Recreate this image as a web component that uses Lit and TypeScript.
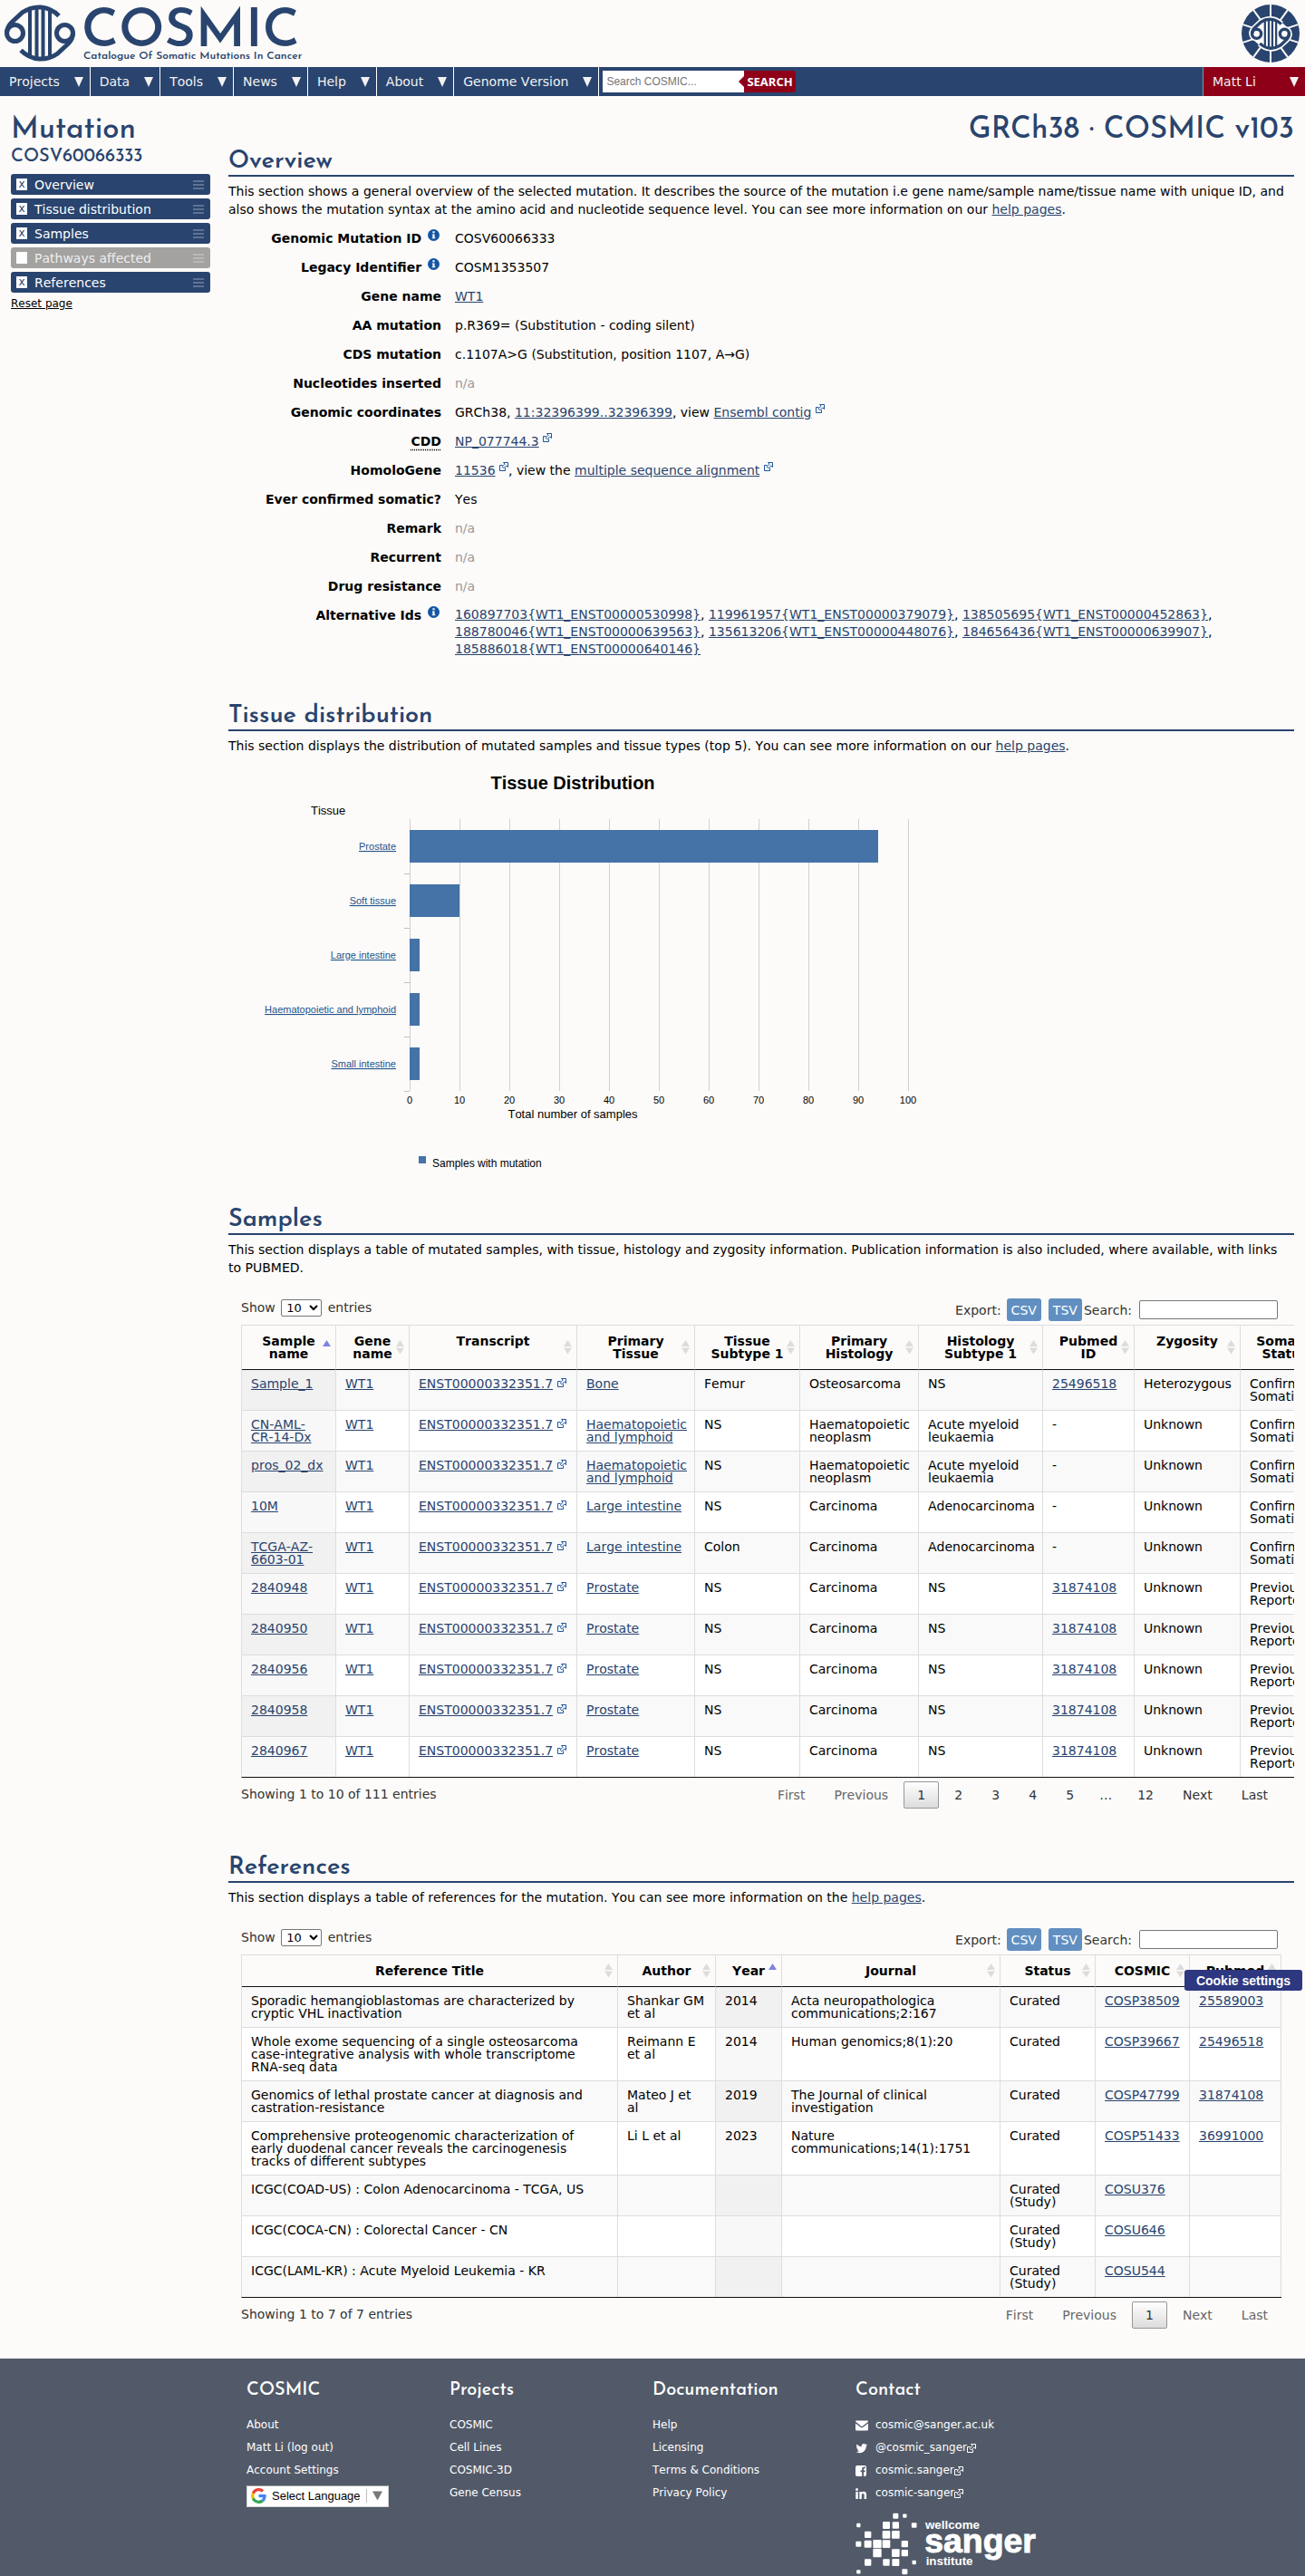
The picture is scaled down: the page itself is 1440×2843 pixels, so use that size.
import { LitElement, html, svg, css, nothing, TemplateResult } from "lit";
import { customElement, property } from "lit/decorators.js";
import { classMap } from "lit/directives/class-map.js";

const externalIcon = html`<svg class="ext" width="10" height="10" viewBox="0 0 10 10" aria-hidden="true">
    <path d="M3.500 3.500h-3v6h6v-3" fill="none" stroke="currentColor" />
    <path d="M4.500 .5h5v5L7.800 3.900 4.800 6.900 3.100 5.200 6.100 2.200z" fill="none" stroke="currentColor" />
  </svg>`;

// one loop with its long stem; the emblem is this half plus the same half turned round
const emblemHalf = svg`
  <circle cx="12.500" cy="32.500" r="9" />
  <path d="M3.500 32.500C3.500 27 5.500 24 9 20.500L21 9.500C33 1.500 49 1.500 61 13.500" />
`;

const emblemShape = svg`
  ${emblemHalf}
  <g transform="rotate(180 40 32.500)">${emblemHalf}</g>
  <path d="M29 6V59M36.500 4V61M43.500 4V61M51 6V59" stroke-width="4" />
`;

@customElement("site-header")
class SiteHeader extends LitElement {
  static styles = css`
    :host {
      display: block;
      font-family: "DejaVu Sans", Verdana, sans-serif;
    }
    .brand {
      display: flex;
      justify-content: space-between;
      align-items: center;
      height: 74px;
      padding: 0 6px 0 4px;
    }
    .brand svg {
      display: block;
    }
    .logo-big {
      font: 600 59px "Josefin Sans", Lato, sans-serif;
    }
    .logo-small {
      font: 600 12px "Josefin Sans", Lato, sans-serif;
    }
    .bar {
      display: flex;
      height: 32px;
      background: #29446e;
    }
    .menu {
      display: flex;
      align-items: center;
      gap: 16px;
      padding: 0 7px 0 10px;
      border: 0;
      border-right: 1px solid #fff;
      background: none;
      color: #f2f2f2;
      font: inherit;
      font-size: 14px;
    }
    .search {
      display: flex;
      align-items: center;
      flex: 1;
      padding-left: 4px;
    }
    .search input {
      box-sizing: border-box;
      width: 156px;
      height: 24px;
      padding: 0 4px;
      border: 0;
      background: #fff;
      font: 12px "Liberation Sans", Arial, sans-serif;
    }
    .search button {
      position: relative;
      height: 24px;
      padding: 0 3px;
      border: 0;
      border-radius: 0 3px 3px 0;
      background: #8e0018;
      color: #fff;
      font: 700 13px "Open Sans", sans-serif;
    }
    .search button::before {
      content: "";
      position: absolute;
      left: -6px;
      top: 6px;
      border: 6px solid transparent;
      border-left-width: 0;
      border-right-color: #8e0018;
    }
    .user {
      justify-content: space-between;
      width: 113px;
      border-left: 1px solid #8b93a5;
      border-right: 0;
      background: #8e0018;
    }
  `;

  static menus = ["Projects", "Data", "Tools", "News", "Help", "About", "Genome Version"];

  caret() {
    return html`<svg width="10" height="11" viewBox="0 0 10 11" aria-hidden="true">
      <path d="M0 0h10L5 11z" fill="#f2f2f2" />
    </svg>`;
  }

  render() {
    return html`
      <div class="brand">
        <svg width="350" height="66" viewBox="0 0 350 66" role="img" aria-label="COSMIC">
          <g fill="none" stroke="#29446e" stroke-width="5">${emblemShape}</g>
          <text class="logo-big" x="86" y="47" fill="#29446e">COSMIC</text>
          <text class="logo-small" x="88" y="61" fill="#29446e">
            Catalogue Of Somatic Mutations In Cancer
          </text>
        </svg>
        <svg width="64" height="64" viewBox="-32 -32 64 64" aria-hidden="true">
          <circle r="32" fill="#29446e" />
          <g stroke="#fcfbf9" stroke-width="2">
            ${[0, 36, 72, 108, 144].map(
              (a) => svg`<path d="M0 -32V32" transform="rotate(${a})" />`
            )}
          </g>
          <g transform="scale(.56) translate(-40 -32)" fill="none">
            <ellipse cx="40" cy="32.500" rx="36" ry="28" fill="#fcfbf9" />
            <g stroke="#fcfbf9" stroke-width="12">${emblemShape}</g>
            <g stroke="#29446e" stroke-width="6">${emblemShape}</g>
          </g>
        </svg>
      </div>
      <nav class="bar">
        ${SiteHeader.menus.map(
          (name) => html`<button class="menu" type="button">${name} ${this.caret()}</button>`
        )}
        <form class="search">
          <input type="text" aria-label="Search COSMIC" placeholder="Search COSMIC..." />
          <button type="button">SEARCH</button>
        </form>
        <button class="menu user" type="button">Matt Li ${this.caret()}</button>
      </nav>
    `;
  }
}

interface Bar {
  label: string;
  value: number;
}

@customElement("tissue-chart")
class TissueChart extends LitElement {
  static styles = css`
    :host {
      display: block;
      font-family: "Liberation Sans", Arial, sans-serif;
    }
    svg {
      display: block;
      max-width: 100%;
    }
    .title {
      font-size: 20px;
      font-weight: 700;
    }
    .axis-title {
      font-size: 13px;
    }
    .tick {
      font-size: 11px;
    }
    .link {
      font-size: 11px;
      fill: #22548c;
      text-decoration: underline;
      text-decoration-color: #000;
    }
    .legend {
      font-size: 12px;
    }
  `;

  @property({ attribute: false }) bars: Bar[] = [];

  render() {
    const left = 200;
    const top = 59;
    const step = 60;
    const unit = 55;
    const bottom = top + step * this.bars.length;
    const ticks = Array.from({ length: 11 }, (_, i) => i);
    return html`
      <svg width="770" height="448" viewBox="0 0 770 448">
        <text class="title" x="380" y="26" text-anchor="middle">Tissue Distribution</text>
        <text class="axis-title" x="91" y="54">Tissue</text>
        ${ticks.map(
          (i) => svg`
            <rect x=${left + i * unit} y=${top} width="1" height=${bottom - top} fill="#d0d0d0" />
            <text class="tick" x=${left + i * unit} y=${bottom + 14} text-anchor="middle">${i * 10}</text>
          `
        )}
        ${this.bars.map(
          (bar, i) => svg`
            <rect x=${left} y=${top + i * step + 12} width=${(bar.value * unit) / 10} height="36" fill="#4572a7" />
            <rect x=${left - 6} y=${top + (i + 1) * step} width="6" height="1" fill="#c0c0c0" />
            <a href="#">
              <text class="link" x=${left - 15} y=${top + i * step + 34} text-anchor="end">${bar.label}</text>
            </a>
          `
        )}
        <text class="axis-title" x="380" y=${bottom + 30} text-anchor="middle">
          Total number of samples
        </text>
        <rect x="210" y="431" width="8" height="8" fill="#4572a7" />
        <text class="legend" x="225" y="443">Samples with mutation</text>
      </svg>
    `;
  }
}

@customElement("site-footer")
class SiteFooter extends LitElement {
  static styles = css`
    :host {
      display: block;
      background: #525a69;
      color: #fff;
      font: 12px/25px "DejaVu Sans", Verdana, sans-serif;
      font-kerning: none;
    }
    .columns {
      display: grid;
      grid-template-columns: repeat(3, 224px) 1fr;
      padding: 23px 12px 0 272px;
    }
    h4 {
      margin: 0 0 14px;
      font: 500 20px/24px "Josefin Sans", Lato, sans-serif;
      font-kerning: normal;
    }
    ul {
      margin: 0;
      padding: 0;
      list-style: none;
    }
    a {
      color: #fff;
      text-decoration: none;
    }
    .contact a {
      display: flex;
      align-items: center;
      height: 25px;
    }
    .icon {
      width: 14px;
      height: 14px;
      margin-right: 8px;
    }
    .language {
      display: flex;
      align-items: center;
      box-sizing: border-box;
      height: 24px;
      margin-top: 4px;
      padding: 0 6px 2px 4px;
      border: 1px solid #d5d5d5;
      border-top-color: #9b9b9b;
      background: #fff;
      color: #000;
      font: 13px "Liberation Sans", Arial, sans-serif;
    }
    .language .g {
      margin-right: 6px;
    }
    .language .arrow {
      margin-left: 6px;
      padding-left: 6px;
      border-left: 1px solid #bbb;
    }
    .sanger {
      display: block;
      margin-top: 1px;
      font-family: "Liberation Sans", Arial, sans-serif;
      font-weight: 700;
    }
    .mid {
      font-size: 40px;
    }
    .large {
      font-size: 112px;
      stroke: #fff;
      stroke-width: 3px;
    }
  `;

  // x, y and side of every square in the institute mark
  static squares = [
    [178, 365, 18], [208, 365, 13], [55, 396, 13], [147, 396, 24], [178, 396, 22],
    [239, 396, 17], [86, 427, 22], [147, 427, 26], [178, 427, 26], [55, 458, 18],
    [86, 458, 24], [117, 458, 28], [147, 458, 26], [208, 458, 22], [117, 488, 28],
    [178, 488, 26], [208, 488, 22], [86, 519, 22], [147, 519, 22], [178, 519, 24],
    [239, 519, 13], [55, 550, 13], [208, 550, 18],
  ];

  column(title: string, links: string[], extra: unknown = nothing) {
    return html`
      <div>
        <h4>${title}</h4>
        <ul>
          ${links.map((l) => html`<li><a href="#">${l}</a></li>`)}
        </ul>
        ${extra}
      </div>
    `;
  }

  render() {
    const language = html`
      <button class="language" type="button">
        <svg class="g" width="17" height="17" viewBox="0 0 48 48" aria-hidden="true">
          <path fill="#ea4335" d="M24 9.500c3.500 0 6.700 1.200 9.200 3.600l6.900-6.900C35.900 2.400 30.500 0 24 0 14.600 0 6.500 5.400 2.600 13.200l8 6.200C12.400 13.700 17.700 9.500 24 9.500z" />
          <path fill="#4285f4" d="M47 24.600c0-1.600-.2-3.100-.4-4.600H24v9h12.900c-.6 3-2.200 5.500-4.700 7.200l7.700 6C44.400 38 47 31.800 47 24.600z" />
          <path fill="#fbbc05" d="M10.500 28.600c-.5-1.500-.8-3-.8-4.600s.3-3.100.8-4.600l-8-6.200C.9 16.500 0 20.100 0 24s.9 7.500 2.600 10.800z" />
          <path fill="#34a853" d="M24 48c6.500 0 11.900-2.100 15.900-5.800l-7.700-6c-2.200 1.400-4.900 2.300-8.200 2.300-6.300 0-11.600-4.200-13.500-9.900l-8 6.200C6.500 42.600 14.600 48 24 48z" />
        </svg>
        Select Language
        <svg class="arrow" width="11" height="15" viewBox="0 0 11 15" aria-hidden="true">
          <path d="M0 2.500h11L5.500 12.500z" fill="#777" />
        </svg>
      </button>
    `;
    return html`
      <footer class="columns">
        ${this.column("COSMIC", ["About", "Matt Li (log out)", "Account Settings"], language)}
        ${this.column("Projects", ["COSMIC", "Cell Lines", "COSMIC-3D", "Gene Census"])}
        ${this.column("Documentation", ["Help", "Licensing", "Terms & Conditions", "Privacy Policy"])}
        <div class="contact">
          <h4>Contact</h4>
          <ul>
            <li>
              <a href="#">
                <svg class="icon" viewBox="0 0 14 14" fill="#fff" aria-hidden="true">
                  <path d="M0 2.600V2.500A1 1 0 0 1 1 1.500h12a1 1 0 0 1 1 1v.3L7 8.200zM0 4.400l6 4.700q1 .7 2 0l6-4.700V11.500a1 1 0 0 1-1 1H1a1 1 0 0 1-1-1z" />
                </svg>
                cosmic@sanger.ac.uk
              </a>
            </li>
            <li>
              <a href="#">
                <svg class="icon" viewBox="0 0 26 28" fill="#fff" aria-hidden="true">
                  <path d="M25.300 6.400c-.7 1-1.600 1.900-2.600 2.600v.7c0 6.800-5.200 14.700-14.700 14.700-2.900 0-5.700-.8-7.900-2.300 2.700.3 5.400-.4 7.600-2.100-2.200 0-4.100-1.500-4.800-3.600.8.100 1.500.1 2.300-.1-2.400-.5-4.100-2.600-4.100-5.100.7.400 1.500.6 2.300.6C1.100 10.300.4 7.300 1.800 4.900c2.600 3.200 6.400 5.200 10.600 5.400-.9-4 2-6.300 5-6.300 1.500 0 2.800.6 3.800 1.600 1.100-.2 2.300-.6 3.300-1.200-.4 1.200-1.200 2.200-2.300 2.800 1-.1 2.100-.4 3.100-.8z" />
                </svg>
                @cosmic_sanger${externalIcon}
              </a>
            </li>
            <li>
              <a href="#">
                <svg class="icon" viewBox="0 0 14 14" aria-hidden="true">
                  <rect x="0" y="1" width="12" height="12" rx="2" fill="#fff" />
                  <path d="M7.200 13V8.300H5.600V6.500h1.600V5c0-1.600 1-2.400 2.400-2.400h1.200v1.700h-.8c-.8 0-1 .4-1 1v1.200h1.800l-.3 1.800H9V13z" fill="#525a69" />
                </svg>
                cosmic.sanger${externalIcon}
              </a>
            </li>
            <li>
              <a href="#">
                <svg class="icon" viewBox="0 0 14 14" fill="#fff" aria-hidden="true">
                  <circle cx="1.500" cy="2.500" r="1.500" />
                  <path d="M.3 5h2.500v8H.3zM4.300 5h2.500v1.100C7.300 5.300 8.100 4.800 9.200 4.800c1.800 0 2.900 1.200 2.900 3.500V13H9.600V8.700c0-1.100-.4-1.800-1.300-1.800S6.800 7.600 6.800 8.700V13H4.300z" />
                </svg>
                cosmic-sanger${externalIcon}
              </a>
            </li>
          </ul>
          <svg class="sanger" width="203" height="78" viewBox="45 330 609 234" fill="#fff">
            ${SiteFooter.squares.map(
              ([x, y, s]) => svg`<rect x=${x - s / 2} y=${y - s / 2} width=${s} height=${s} rx="3" />`
            )}
            <text class="mid" x="276" y="408">wellcome</text>
            <text class="large" x="274" y="486">sanger</text>
            <text class="mid" x="278" y="528">institute</text>
          </svg>
        </div>
      </footer>
    `;
  }
}

interface Column {
  label: string;
  width?: number;
  sorted?: boolean;
}

const sampleColumns: Column[] = [
  { label: "Sample name", width: 104, sorted: true },
  { label: "Gene name", width: 81 },
  { label: "Transcript", width: 185 },
  { label: "Primary Tissue", width: 130 },
  { label: "Tissue Subtype 1", width: 116 },
  { label: "Primary Histology", width: 131 },
  { label: "Histology Subtype 1", width: 137 },
  { label: "Pubmed ID", width: 101 },
  { label: "Zygosity", width: 117 },
  { label: "Somatic Status", width: 99 },
];

// name, primary tissue, subtype, histology, histology subtype, pubmed, zygosity, status
const samples = [
  ["Sample_1", "Bone", "Femur", "Osteosarcoma", "NS", "25496518", "Heterozygous", "Confirmed Somatic"],
  ["CN-AML-CR-14-Dx", "Haematopoietic and lymphoid", "NS", "Haematopoietic neoplasm", "Acute myeloid leukaemia", "-", "Unknown", "Confirmed Somatic"],
  ["pros_02_dx", "Haematopoietic and lymphoid", "NS", "Haematopoietic neoplasm", "Acute myeloid leukaemia", "-", "Unknown", "Confirmed Somatic"],
  ["10M", "Large intestine", "NS", "Carcinoma", "Adenocarcinoma", "-", "Unknown", "Confirmed Somatic"],
  ["TCGA-AZ-6603-01", "Large intestine", "Colon", "Carcinoma", "Adenocarcinoma", "-", "Unknown", "Confirmed Somatic"],
  ...["2840948", "2840950", "2840956", "2840958", "2840967"].map((id) => [
    id, "Prostate", "NS", "Carcinoma", "NS", "31874108", "Unknown", "Previously Reported",
  ]),
];

const referenceColumns: Column[] = [
  { label: "Reference Title" },
  { label: "Author", width: 108 },
  { label: "Year", width: 73, sorted: true },
  { label: "Journal", width: 241 },
  { label: "Status", width: 105 },
  { label: "COSMIC", width: 104 },
  { label: "Pubmed", width: 101 },
];

const references = [
  ["Sporadic hemangioblastomas are characterized by cryptic VHL inactivation", "Shankar GM et al", "2014", "Acta neuropathologica communications;2:167", "Curated", "COSP38509", "25589003"],
  ["Whole exome sequencing of a single osteosarcoma case-integrative analysis with whole transcriptome RNA-seq data", "Reimann E et al", "2014", "Human genomics;8(1):20", "Curated", "COSP39667", "25496518"],
  ["Genomics of lethal prostate cancer at diagnosis and castration-resistance", "Mateo J et al", "2019", "The Journal of clinical investigation", "Curated", "COSP47799", "31874108"],
  ["Comprehensive proteogenomic characterization of early duodenal cancer reveals the carcinogenesis tracks of different subtypes", "Li L et al", "2023", "Nature communications;14(1):1751", "Curated", "COSP51433", "36991000"],
  ["ICGC(COAD-US) : Colon Adenocarcinoma - TCGA, US", "", "", "", "Curated (Study)", "COSU376", ""],
  ["ICGC(COCA-CN) : Colorectal Cancer - CN", "", "", "", "Curated (Study)", "COSU646", ""],
  ["ICGC(LAML-KR) : Acute Myeloid Leukemia - KR", "", "", "", "Curated (Study)", "COSU544", ""],
];

const alternativeIds = [
  "160897703{WT1_ENST00000530998}",
  "119961957{WT1_ENST00000379079}",
  "138505695{WT1_ENST00000452863}",
  "188780046{WT1_ENST00000639563}",
  "135613206{WT1_ENST00000448076}",
  "184656436{WT1_ENST00000639907}",
  "185886018{WT1_ENST00000640146}",
];

@customElement("app-root")
class AppRoot extends LitElement {
  static styles = css`
    :host {
      display: block;
      background: #fcfbf9;
      color: #000;
      font: 14px/20px "DejaVu Sans", Verdana, sans-serif;
      font-kerning: none;
    }
    a {
      color: #29446e;
    }
    .page {
      display: grid;
      grid-template-columns: 220px minmax(0, 1fr);
      gap: 20px;
      padding: 20px 12px 21px;
    }
    h1,
    h2,
    h3 {
      margin: 0;
      color: #29446e;
      font-family: "Josefin Sans", Lato, sans-serif;
      font-weight: 600;
      font-kerning: normal;
    }
    h1 {
      font-size: 33px;
      font-weight: 500;
      line-height: 36px;
    }
    .code {
      margin-bottom: 8px;
      font-size: 20px;
      font-weight: 500;
      line-height: 22px;
    }
    .version {
      text-align: right;
    }
    h3 {
      padding-top: 3px;
      border-bottom: 2px solid #29446e;
      font-size: 27px;
      line-height: 28px;
    }
    p {
      margin: 6px 0 0;
    }
    section {
      margin-bottom: 37px;
    }

    /* sidebar */
    .toggles {
      display: grid;
      gap: 4px;
    }
    .toggle {
      display: flex;
      align-items: center;
      height: 23px;
      padding: 0 7px 0 6px;
      border-radius: 3px;
      background: #29446e;
      color: #fff;
    }
    .toggle.off {
      background: #a3a2a0;
      color: #eee;
    }
    .toggle label {
      flex: 1;
      padding: 1px 0 0 8px;
    }
    .toggle input {
      display: grid;
      place-items: center;
      width: 12px;
      height: 13px;
      margin: 0;
      appearance: none;
      background: #fff;
      color: #29446e;
    }
    .toggle input:checked::before {
      content: "x";
      font: 12px/11px "DejaVu Sans", sans-serif;
    }
    .grip {
      width: 12px;
      height: 10px;
      background: repeating-linear-gradient(
        rgba(255, 255, 255, 0.25) 0 2px,
        transparent 2px 4px
      );
    }
    .reset {
      display: inline-block;
      margin-top: 2px;
      color: #000;
      font-size: 12px;
    }

    /* overview */
    dl {
      display: grid;
      grid-template-columns: 235px minmax(0, 1fr);
      gap: 12px 15px;
      margin: 12px 0 48px;
    }
    dt {
      font-weight: 700;
      text-align: right;
    }
    dt abbr {
      text-decoration: underline dotted;
      text-underline-offset: 4px;
    }
    dd {
      margin: 0;
    }
    .ids {
      max-width: 880px;
      line-height: 19px;
    }
    .none {
      color: #999;
    }
    .info {
      margin: -2px 2px 0;
      vertical-align: 2px;
    }
    .ext {
      color: #1d559d;
      vertical-align: 4px;
    }
    td .ext {
      vertical-align: 1px;
    }

    tissue-chart {
      margin-top: 12px;
    }

    /* tables */
    .data {
      position: relative;
      margin: 24px 0 0;
      padding: 0 14px 12px;
      overflow-x: clip;
      color: #333;
    }
    .controls {
      display: flex;
      justify-content: space-between;
      align-items: flex-start;
      padding: 0 4px 4px 0;
    }
    .controls select {
      height: 19px;
      width: 45px;
      margin: 0 2px;
      padding: 0 1px;
      border: 1px solid #767676;
      border-radius: 2px;
      background: #fff;
      font: 13px "DejaVu Sans", sans-serif;
    }
    .tools {
      display: flex;
      align-items: center;
    }
    .tools button {
      height: 25px;
      margin-left: 6px;
      padding: 0 5px;
      border: 0;
      border-radius: 3px;
      background: #618fc2;
      color: #fff;
      font: inherit;
    }
    .tools button + button {
      margin: 0 2px 0 8px;
    }
    .tools input {
      box-sizing: border-box;
      width: 153px;
      height: 21px;
      margin-left: 8px;
      border: 1px solid #767676;
      border-radius: 2px;
      background: #fff;
    }
    table {
      width: 100%;
      table-layout: fixed;
      border-collapse: separate;
      border-spacing: 0;
      border-top: 1px solid #ddd;
      border-left: 1px solid #ddd;
      border-bottom: 1px solid #111;
      color: #000;
      line-height: 14px;
    }
    th {
      position: relative;
      padding: 10px 16px;
      border-right: 1px solid #ddd;
      border-bottom: 1px solid #111;
      text-align: center;
      vertical-align: top;
    }
    th svg {
      position: absolute;
      right: 5px;
      top: calc(50% - 8px);
    }
    td {
      padding: 8px 10px;
      border-right: 1px solid #ddd;
      border-bottom: 1px solid #ddd;
      background: #fff;
      vertical-align: top;
    }
    td.sorted {
      background: #f8f8f8;
    }
    tr:nth-child(odd) td {
      background: #f9f9f9;
    }
    tr:nth-child(odd) td.sorted {
      background: #f1f1f1;
    }
    tr:last-child td {
      border-bottom: 0;
    }
    .pager {
      display: flex;
      justify-content: space-between;
      align-items: flex-start;
      margin-top: 4px;
    }
    .pages {
      display: flex;
      gap: 2px;
    }
    .status {
      padding-top: 4px;
    }
    .pages button {
      min-width: 39px;
      height: 30px;
      padding: 0 14px;
      border: 1px solid transparent;
      border-radius: 2px;
      background: none;
      color: #333;
      font: inherit;
    }
    .pages span {
      padding: 0 11px;
      line-height: 30px;
    }
    .pages button:disabled {
      color: #666;
    }
    .pages button.current {
      border-color: #979797;
      background: linear-gradient(#fff, #dcdcdc);
    }
    .cookie {
      position: absolute;
      right: -9px;
      top: 46px;
      height: 23px;
      width: 130px;
      padding: 0;
      border: 0;
      border-radius: 3px;
      background: #2d3880;
      color: #fff;
      font: 700 14px "Liberation Sans", Arial, sans-serif;
    }
    .refs {
      overflow: visible;
    }
  `;

  static tissues: Bar[] = [
    { label: "Prostate", value: 94 },
    { label: "Soft tissue", value: 10 },
    { label: "Large intestine", value: 2 },
    { label: "Haematopoietic and lymphoid", value: 2 },
    { label: "Small intestine", value: 2 },
  ];

  toggle(name: string, on = true) {
    const id = name.toLowerCase().replace(" ", "-");
    return html`
      <div class=${classMap({ toggle: true, off: !on })}>
        <input type="checkbox" id=${id} .checked=${on} ?disabled=${!on} />
        <label for=${id}>${name}</label>
        <span class="grip"></span>
      </div>
    `;
  }

  info() {
    return html`<svg class="info" width="13" height="13" viewBox="0 0 12 12" aria-hidden="true">
      <circle cx="6" cy="6" r="6" fill="#1256a4" />
      <path d="M5 2h2v2H5zM4.500 5H7v3.500h.7V9.500H4.300V8.500H5V6h-.5z" fill="#fff" />
    </svg>`;
  }

  row(label: unknown, value: unknown) {
    return html`<dt>${label}</dt>
      <dd>${value}</dd>`;
  }

  controls(id: string) {
    return html`
      <div class="controls">
        <div>
          <label for="${id}-length">Show</label>
          <select id="${id}-length">
            <option>10</option>
            <option>25</option>
          </select>
          entries
        </div>
        <div class="tools">
          Export:
          <button type="button">CSV</button>
          <button type="button">TSV</button>
          <label for="${id}-search">Search:</label>
          <input id="${id}-search" type="search" />
        </div>
      </div>
    `;
  }

  head(columns: Column[]) {
    return html`
      <colgroup>
        ${columns.map((c) => html`<col style=${c.width ? `width:${c.width}px` : nothing} />`)}
      </colgroup>
      <thead>
        <tr>
          ${columns.map(
            (c) => html`<th scope="col">
              ${c.label}
              <svg width="9" height="16" viewBox="0 0 9 16" aria-hidden="true">
                <path d="M0 7h9L4.500 0z" fill=${c.sorted ? "#7d83e0" : "#dcdcdc"} />
                ${c.sorted ? nothing : svg`<path d="M0 8.500h9L4.500 15.500z" fill="#dcdcdc" />`}
              </svg>
            </th>`
          )}
        </tr>
      </thead>
    `;
  }

  link(text: string) {
    return text === "-" || !text ? text : html`<a href="#">${text}</a>`;
  }

  pager(status: string, pages: string[], off: string[]): TemplateResult {
    return html`
      <div class="pager">
        <div class="status">${status}</div>
        <div class="pages">
          ${pages.map((p) =>
            p === "…"
              ? html`<span>${p}</span>`
              : html`<button
                  type="button"
                  class=${classMap({ current: p === "1" })}
                  ?disabled=${off.includes(p)}
                >
                  ${p}
                </button>`
          )}
        </div>
      </div>
    `;
  }

  overview() {
    const none = html`<span class="none">n/a</span>`;
    return html`
      <h3>Overview</h3>
      <p>
        This section shows a general overview of the selected mutation. It describes the source of
        the mutation i.e gene name/sample name/tissue name with unique ID, and also shows the
        mutation syntax at the amino acid and nucleotide sequence level. You can see more
        information on our <a href="#">help pages</a>.
      </p>
      <dl>
        ${this.row(html`Genomic Mutation ID ${this.info()}`, "COSV60066333")}
        ${this.row(html`Legacy Identifier ${this.info()}`, "COSM1353507")}
        ${this.row("Gene name", this.link("WT1"))}
        ${this.row("AA mutation", "p.R369= (Substitution - coding silent)")}
        ${this.row("CDS mutation", "c.1107A>G (Substitution, position 1107, A→G)")}
        ${this.row("Nucleotides inserted", none)}
        ${this.row(
          "Genomic coordinates",
          html`GRCh38, ${this.link("11:32396399..32396399")}, view
          ${this.link("Ensembl contig")} ${externalIcon}`
        )}
        ${this.row(html`<abbr>CDD</abbr>`, html`${this.link("NP_077744.3")} ${externalIcon}`)}
        ${this.row(
          "HomoloGene",
          html`${this.link("11536")} ${externalIcon}, view the
          ${this.link("multiple sequence alignment")} ${externalIcon}`
        )}
        ${this.row("Ever confirmed somatic?", "Yes")} ${this.row("Remark", none)}
        ${this.row("Recurrent", none)} ${this.row("Drug resistance", none)}
        <dt>Alternative Ids ${this.info()}</dt>
        <dd class="ids">
          ${alternativeIds.map((id, i) => html`${i ? ", " : ""}${this.link(id)}`)}
        </dd>
      </dl>
    `;
  }

  samplesTable() {
    return html`
      <table>
        ${this.head(sampleColumns)}
        <tbody>
          ${samples.map(
            ([name, tissue, subtype, histology, histSub, pubmed, zygosity, status]) => html`
              <tr>
                <td class="sorted">${this.link(name)}</td>
                <td>${this.link("WT1")}</td>
                <td>${this.link("ENST00000332351.7")} ${externalIcon}</td>
                <td>${this.link(tissue)}</td>
                <td>${subtype}</td>
                <td>${histology}</td>
                <td>${histSub}</td>
                <td>${this.link(pubmed)}</td>
                <td>${zygosity}</td>
                <td>${status}</td>
              </tr>
            `
          )}
        </tbody>
      </table>
    `;
  }

  referencesTable() {
    return html`
      <table>
        ${this.head(referenceColumns)}
        <tbody>
          ${references.map(
            (row) => html`
              <tr>
                ${row.map(
                  (cell, i) =>
                    html`<td class=${i === 2 ? "sorted" : ""}>${i > 4 ? this.link(cell) : cell}</td>`
                )}
              </tr>
            `
          )}
        </tbody>
      </table>
    `;
  }

  render() {
    return html`
      <site-header></site-header>
      <div class="page">
        <aside>
          <h1>Mutation</h1>
          <h2 class="code">COSV60066333</h2>
          <div class="toggles">
            ${this.toggle("Overview")} ${this.toggle("Tissue distribution")}
            ${this.toggle("Samples")} ${this.toggle("Pathways affected", false)}
            ${this.toggle("References")}
          </div>
          <a class="reset" href="#">Reset page</a>
        </aside>
        <main>
          <h1 class="version">GRCh38 · COSMIC v103</h1>
          ${this.overview()}
          <section>
            <h3>Tissue distribution</h3>
            <p>
              This section displays the distribution of mutated samples and tissue types (top 5).
              You can see more information on our <a href="#">help pages</a>.
            </p>
            <tissue-chart .bars=${AppRoot.tissues}></tissue-chart>
          </section>
          <section>
            <h3>Samples</h3>
            <p>
              This section displays a table of mutated samples, with tissue, histology and zygosity
              information. Publication information is also included, where available, with links
              to&nbsp;PUBMED.
            </p>
            <div class="data">
              ${this.controls("samples")} ${this.samplesTable()}
              ${this.pager(
                "Showing 1 to 10 of 111 entries",
                ["First", "Previous", "1", "2", "3", "4", "5", "…", "12", "Next", "Last"],
                ["First", "Previous"]
              )}
            </div>
          </section>
          <div>
            <h3>References</h3>
            <p>
              This section displays a table of references for the mutation. You can see more
              information on the <a href="#">help pages</a>.
            </p>
            <div class="data refs">
              ${this.controls("references")} ${this.referencesTable()}
              ${this.pager(
                "Showing 1 to 7 of 7 entries",
                ["First", "Previous", "1", "Next", "Last"],
                ["First", "Previous", "Next", "Last"]
              )}
              <button class="cookie" type="button">Cookie settings</button>
            </div>
          </div>
        </main>
      </div>
      <site-footer></site-footer>
    `;
  }
}
